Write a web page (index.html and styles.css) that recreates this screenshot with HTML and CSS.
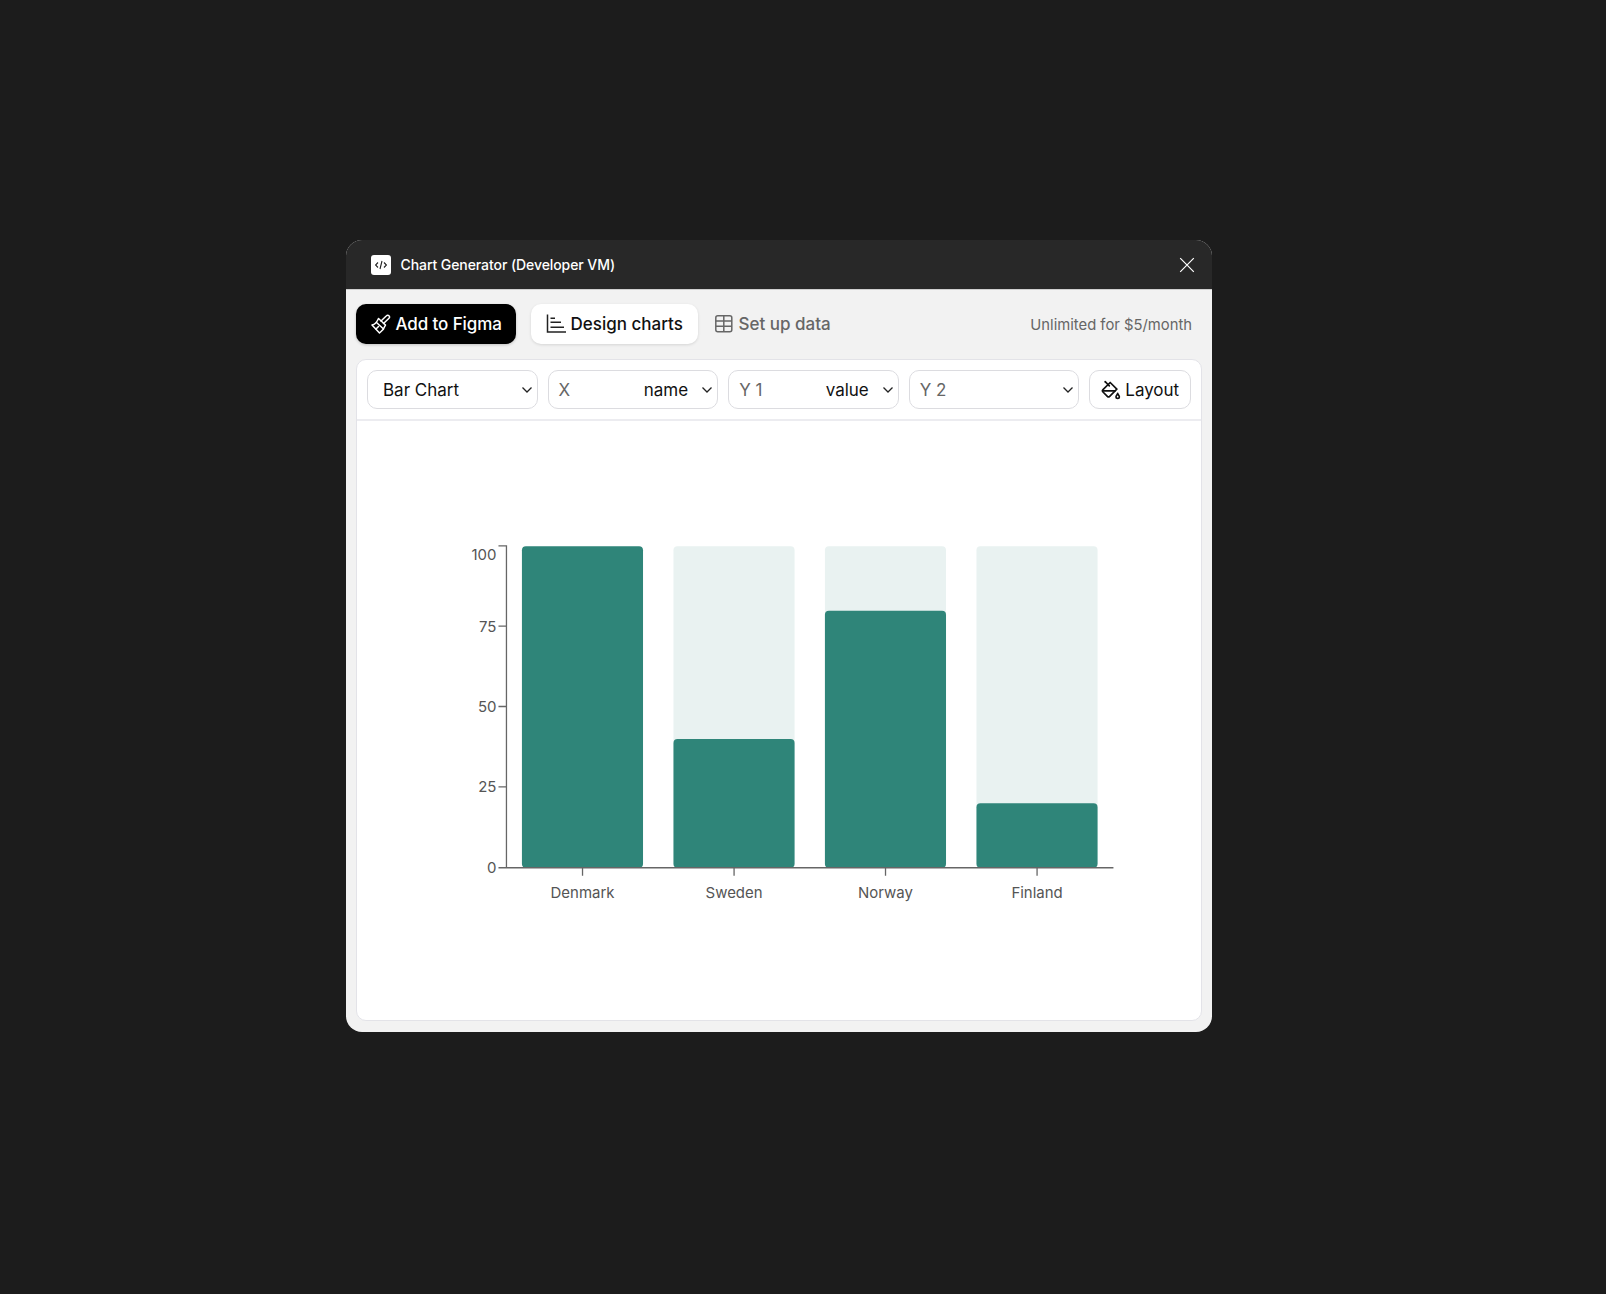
FILE: index.html
```html
<!DOCTYPE html>
<html>

<head>
  <link rel="stylesheet" href="styles.css">
</head>

<body>
  <div class="window">
    <!-- title bar -->
    <div class="titlebar">
      <div class="plugin-icon">
        <svg width="14" height="14" viewBox="0 0 14 14" fill="none" stroke="#222" stroke-width="1.1">
          <path d="M4 4.5 1.6 7 4 9.5M10 4.5 12.4 7 10 9.5M8 3 6 11" />
        </svg>
      </div>
      <div class="plugin-name">Chart Generator (Developer VM)</div>
      <svg class="close" width="16" height="16" viewBox="0 0 16 16" stroke="#fff" stroke-width="1.2">
        <path d="M1.2 1.2 14.8 14.8M14.8 1.2 1.2 14.8" />
      </svg>
    </div>

    <div class="content">
      <!-- tabs -->
      <div class="tabs">
        <div class="tab tab-primary">
          <svg width="20" height="20" viewBox="0 0 20 20" fill="none" stroke="#fff" stroke-width="1.5" stroke-linejoin="round" stroke-linecap="round">
            <path d="M7.500 4.500 14.500 11C13.500 14 11 17 8.500 19L1 11C3.500 10.500 6 8 7.500 4.500Z" />
            <path d="M5.500 8.500 12.500 15" />
            <path d="M10 7 15.500 1.800A1.600 1.600 0 0 1 18 4.200L12.500 9.500" />
            <path d="M5 15 7.500 12.500" />
          </svg>
          <span>Add to Figma</span>
        </div>
        <div class="tab tab-active">
          <svg width="20" height="20" viewBox="0 0 20 20" fill="none" stroke="#222" stroke-width="1.5">
            <path d="M1.500 .5V18H20M4.500 4.300H9M4.500 8.300H15M4.500 13.300H18" />
          </svg>
          <span>Design charts</span>
        </div>
        <div class="tab tab-idle">
          <svg width="20" height="20" viewBox="0 0 20 20" fill="none" stroke="#666" stroke-width="1.5">
            <rect x="1.800" y="1.800" width="16" height="16" rx="2" />
            <path d="M1.800 7H17.800M1.800 12.300H17.800M9.800 1.800V17.800" />
          </svg>
          <span>Set up data</span>
        </div>
        <div class="pricing">Unlimited for $5/month</div>
      </div>

      <div class="panel">
        <!-- controls -->
        <div class="controls">
          <div class="select">
            <span class="select-value first">Bar Chart</span>
            <svg class="chevron" width="12" height="8" viewBox="0 0 12 8" fill="none" stroke="#222" stroke-width="1.3"><path d="M1.500 1.500 6 6l4.500-4.500" /></svg>
          </div>
          <div class="select">
            <span class="select-label">X</span>
            <span class="select-value">name</span>
            <svg class="chevron" width="12" height="8" viewBox="0 0 12 8" fill="none" stroke="#222" stroke-width="1.3"><path d="M1.500 1.500 6 6l4.500-4.500" /></svg>
          </div>
          <div class="select">
            <span class="select-label">Y 1</span>
            <span class="select-value">value</span>
            <svg class="chevron" width="12" height="8" viewBox="0 0 12 8" fill="none" stroke="#222" stroke-width="1.3"><path d="M1.500 1.500 6 6l4.500-4.500" /></svg>
          </div>
          <div class="select">
            <span class="select-label">Y 2</span>
            <span class="select-value"></span>
            <svg class="chevron" width="12" height="8" viewBox="0 0 12 8" fill="none" stroke="#222" stroke-width="1.3"><path d="M1.500 1.500 6 6l4.500-4.500" /></svg>
          </div>
          <div class="layout-button">
            <svg width="20" height="20" viewBox="0 0 24 24" fill="none" stroke="#111" stroke-width="2" stroke-linecap="round" stroke-linejoin="round">
              <path d="m19 11-8-8-8.600 8.600a2 2 0 0 0 0 2.800l5.200 5.200c.8.8 2 .8 2.800 0L19 11Z" />
              <path d="m5 2 5 5" />
              <path d="M2 13h15" />
              <path d="M22 20a2 2 0 1 1-4 0c0-1.600 1.700-2.400 2-4 .3 1.600 2 2.400 2 4Z" />
            </svg>
            <span>Layout</span>
          </div>
        </div>

        <!-- chart -->
        <svg class="chart" viewBox="0 0 844 600">
          <rect class="bar-bg" x="316.300" y="125.500" width="121.300" height="322" rx="4" />
          <rect class="bar-bg" x="468" y="125.500" width="121.300" height="322" rx="4" />
          <rect class="bar-bg" x="619.800" y="125.500" width="121.300" height="322" rx="4" />

          <rect class="bar" x="164.500" y="125.500" width="121.300" height="322" rx="4" />
          <rect class="bar" x="316.300" y="318.500" width="121.300" height="129" rx="4" />
          <rect class="bar" x="468" y="190" width="121.300" height="257.500" rx="4" />
          <rect class="bar" x="619.800" y="383" width="121.300" height="64.500" rx="4" />

          <path class="axis" d="M141 125H149V447.500M141 205.500H149M141 286H149M141 366.500H149M141 447.500H757" />
          <path class="axis" d="M225.200 447.500V455.500M377 447.500V455.500M528.700 447.500V455.500M680.500 447.500V455.500" />

          <text class="tick" x="139" y="139" text-anchor="end">100</text>
          <text class="tick" x="139" y="211" text-anchor="end">75</text>
          <text class="tick" x="139" y="291.500" text-anchor="end">50</text>
          <text class="tick" x="139" y="372" text-anchor="end">25</text>
          <text class="tick" x="139" y="452.500" text-anchor="end">0</text>

          <text class="tick" x="225.200" y="478" text-anchor="middle">Denmark</text>
          <text class="tick" x="377" y="478" text-anchor="middle">Sweden</text>
          <text class="tick" x="528.700" y="478" text-anchor="middle">Norway</text>
          <text class="tick" x="680.500" y="478" text-anchor="middle">Finland</text>
        </svg>
      </div>
    </div>
  </div>
</body>

</html>
```

FILE: styles.css
```css
body {
  margin: 0;
  padding: 240px 0 0 346px;
  height: 1294px;
  box-sizing: border-box;
  background-color: #1c1c1c;
  font-family: "Inter", "Liberation Sans", sans-serif;
}

.window {
  width: 866px;
  height: 792px;
  border-radius: 16px;
  overflow: hidden;
  background-color: #f2f2f2;
}

.titlebar {
  display: flex;
  align-items: center;
  height: 49px;
  padding: 0 17px 0 25px;
  background-color: #282828;
  border-bottom: 1px solid #cfcfcf;
}

.plugin-icon {
  display: flex;
  align-items: center;
  justify-content: center;
  width: 20px;
  height: 20px;
  border-radius: 3px;
  background-color: #fff;
}

.plugin-name {
  flex: 1;
  margin-left: 9.5px;
  font-size: 14px;
  font-weight: 500;
  letter-spacing: -0.08px;
  color: #fff;
}

.content {
  display: flex;
  flex-direction: column;
  padding: 14px 10px 10px 10px;
  gap: 15px;
}

.tabs {
  display: flex;
  align-items: center;
  height: 40px;
}

.tab {
  display: flex;
  align-items: center;
  gap: 4.5px;
  height: 40px;
  box-sizing: border-box;
  border-radius: 10px;
  font-size: 17px;
  font-weight: 500;
}

.tab-primary {
  width: 160px;
  padding-left: 15px;
  background-color: #000;
  color: #fff;
  letter-spacing: -0.1px;
  box-shadow: 0 1px 3px rgba(0, 0, 0, 0.2);
}

.tab-active {
  width: 167px;
  margin-left: 15px;
  padding-left: 15px;
  background-color: #fff;
  color: #111;
  box-shadow: 0 1px 3px rgba(0, 0, 0, 0.12);
}

.tab-idle {
  margin-left: 16px;
  color: #666;
}

.pricing {
  margin-left: auto;
  margin-right: 10px;
  padding-top: 1px;
  font-size: 14.8px;
  color: #666;
}

.panel {
  display: flex;
  flex-direction: column;
  height: 662px;
  box-sizing: border-box;
  border: 1px solid #e3e3e8;
  border-radius: 10px;
  background-color: #fff;
  overflow: hidden;
}

.controls {
  display: flex;
  gap: 10px;
  padding: 10px;
  border-bottom: 2px solid #ececf0;
}

.select {
  display: flex;
  align-items: center;
  width: 170.6px;
  height: 39px;
  box-sizing: border-box;
  padding: 0 4px 0 10px;
  border: 1px solid #dcdce0;
  border-radius: 10px;
  font-size: 17px;
}

.select-label {
  color: #666;
}

.select-value {
  margin-left: auto;
  margin-right: 13px;
  padding-top: 1px;
  color: #111;
}

.select-value.first {
  margin-left: 5px;
}

.select-value + .chevron {
  margin-left: 0;
}

.select-value.first + .chevron {
  margin-left: auto;
}

.layout-button {
  display: flex;
  align-items: center;
  justify-content: center;
  gap: 4px;
  width: 101.6px;
  height: 39px;
  box-sizing: border-box;
  border: 1px solid #dcdce0;
  border-radius: 10px;
  font-size: 17px;
  letter-spacing: -0.05px;
  color: #111;
}

.chart {
  display: block;
  width: 844px;
  height: 600px;
}

.bar-bg {
  fill: #e9f2f1;
}

.bar {
  fill: #2f8579;
}

.axis {
  fill: none;
  stroke: #666;
  stroke-width: 1.3;
}

.tick {
  font-size: 15px;
  fill: #555;
}
```
